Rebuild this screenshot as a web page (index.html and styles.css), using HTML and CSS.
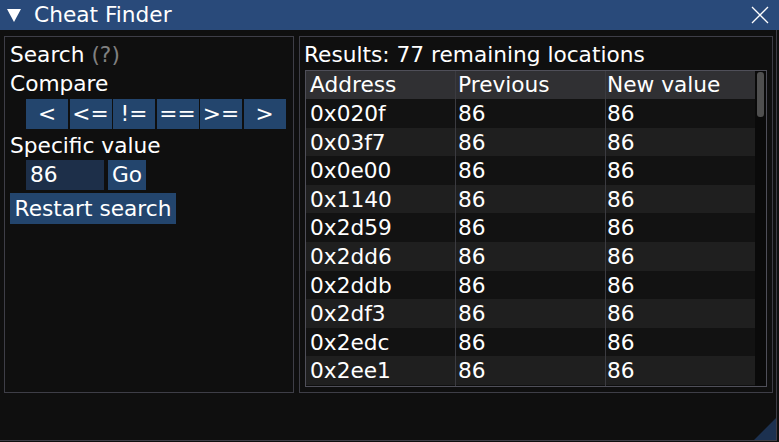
FILE: index.html
```html
<!DOCTYPE html>
<html lang="en">
<head>
    <meta charset="UTF-8">
    <title>Cheat Finder</title>
    <link rel="stylesheet" href="styles.css">
</head>
<body>

    <div class="window">
        <div class="titlebar">
            <svg class="arrow" width="14" height="14" viewBox="0 0 14 14"><polygon points="0,0 14,0 7,13" fill="#fff"/></svg>
            <span class="title">Cheat Finder</span>
            <svg class="close" width="18" height="18" viewBox="0 0 18 18"><path d="M1 1 L17 17 M17 1 L1 17" stroke="#fff" stroke-width="1.3" fill="none"/></svg>
        </div>

        <div class="body">
            <div class="child left">
                <div class="line">Search <span class="muted">(?)</span></div>
                <div class="line gap5">Compare</div>
                <div class="compare">
                    <button class="btn">&lt;</button>
                    <button class="btn">&lt;=</button>
                    <button class="btn">!=</button>
                    <button class="btn">==</button>
                    <button class="btn">&gt;=</button>
                    <button class="btn">&gt;</button>
                </div>
                <div class="line gap5">Specific value</div>
                <div class="value-row">
                    <div class="input">86</div>
                    <button class="btn go">Go</button>
                </div>
                <button class="btn restart">Restart search</button>
            </div>

            <div class="child right">
                <div class="line results">Results: 77 remaining locations</div>
                <div class="table">
                    <div class="grid">
                        <div class="row head"><span class="cell">Address</span><span class="cell">Previous</span><span class="cell">New value</span></div>
                        <div class="row"><span class="cell">0x020f</span><span class="cell">86</span><span class="cell">86</span></div>
                        <div class="row"><span class="cell">0x03f7</span><span class="cell">86</span><span class="cell">86</span></div>
                        <div class="row"><span class="cell">0x0e00</span><span class="cell">86</span><span class="cell">86</span></div>
                        <div class="row"><span class="cell">0x1140</span><span class="cell">86</span><span class="cell">86</span></div>
                        <div class="row"><span class="cell">0x2d59</span><span class="cell">86</span><span class="cell">86</span></div>
                        <div class="row"><span class="cell">0x2dd6</span><span class="cell">86</span><span class="cell">86</span></div>
                        <div class="row"><span class="cell">0x2ddb</span><span class="cell">86</span><span class="cell">86</span></div>
                        <div class="row"><span class="cell">0x2df3</span><span class="cell">86</span><span class="cell">86</span></div>
                        <div class="row"><span class="cell">0x2edc</span><span class="cell">86</span><span class="cell">86</span></div>
                        <div class="row"><span class="cell">0x2ee1</span><span class="cell">86</span><span class="cell">86</span></div>
                    </div>
                    <div class="scrollbar"><div class="thumb"></div></div>
                </div>
            </div>
        </div>

        <div class="grip"></div>
    </div>

</body>
</html>
```

FILE: styles.css
```css
body {
    margin: 0;
    background-color: #0f0f0f;
    color: #ffffff;
    font-family: 'DejaVu Sans', sans-serif;
    font-size: 21.7px;
    width: 779px;
    height: 442px;
    overflow: hidden;
}
.window {
    position: relative;
    width: 779px;
    height: 441px;
}
.titlebar {
    height: 30px;
    background-color: #294a7a;
    display: flex;
    align-items: center;
}
.arrow {
    margin-left: 7px;
    margin-top: 2px;
}
.title {
    margin-left: 13px;
    line-height: 30px;
}
.close {
    margin-left: auto;
    margin-right: 10px;
}
.body {
    display: flex;
    gap: 5px;
    padding: 6px 0 0 4px;
    width: 777px;
    height: 411px;
    box-sizing: border-box;
    border-right: 1px solid #3e3e47;
    border-bottom: 1px solid #3e3e47;
}
.child {
    border: 1px solid #3e3e47;
    height: 357px;
    box-sizing: border-box;
    padding: 6px 5px;
}
.left {
    width: 290px;
    display: flex;
    flex-direction: column;
    align-items: flex-start;
}
.right {
    width: 474px;
}
.line {
    height: 24px;
    line-height: 24px;
    white-space: nowrap;
}
.gap5 {
    margin-top: 5px;
}
.muted {
    color: #808080;
}
.btn {
    font: inherit;
    color: #ffffff;
    background-color: #23456d;
    border: none;
    padding: 0;
    height: 30px;
    line-height: 30px;
    text-align: center;
}
.compare {
    display: flex;
    gap: 1.5px;
    margin: 3px 0 0 16px;
}
.compare .btn {
    width: 42px;
}
.value-row {
    display: flex;
    gap: 4px;
    margin: 2px 0 0 16px;
}
.input {
    width: 78px;
    height: 30px;
    line-height: 30px;
    padding-left: 4px;
    box-sizing: border-box;
    background-color: #1d2f49;
}
.go {
    width: 38px;
}
.restart {
    margin-top: 3px;
    width: 166px;
    height: 31px;
    line-height: 31px;
}
.results {
    margin-left: -1px;
}
.table {
    display: flex;
    margin-top: 3px;
    width: 462px;
    height: 317px;
    box-sizing: border-box;
    border: 1px solid #4f4f59;
}
.grid {
    width: 449px;
}
.row {
    display: grid;
    grid-template-columns: 150px 150px 149px;
    height: 28.6px;
    line-height: 29.6px;
    background-color: #121212;
}
.row:nth-child(odd) {
    background-color: #1f1f1f;
}
.row.head {
    height: 28px;
    line-height: 28px;
    background-color: #303033;
}
.cell {
    white-space: nowrap;
    border-right: 1px solid #3b3b40;
}
.cell:nth-child(1) {
    padding-left: 4px;
}
.cell:nth-child(2) {
    padding-left: 2px;
}
.cell:nth-child(3) {
    padding-left: 1px;
    border-right: none;
}
.scrollbar {
    width: 11px;
    background-color: #0a0a0a;
}
.thumb {
    margin: 1px 2px 0 2px;
    height: 45px;
    border-radius: 3px;
    background-color: #4f4f4f;
}
.grip {
    position: absolute;
    right: 3px;
    bottom: 1px;
    width: 22px;
    height: 22px;
    background-color: #1c3150;
    clip-path: polygon(100% 0, 100% 100%, 0 100%);
}
```
